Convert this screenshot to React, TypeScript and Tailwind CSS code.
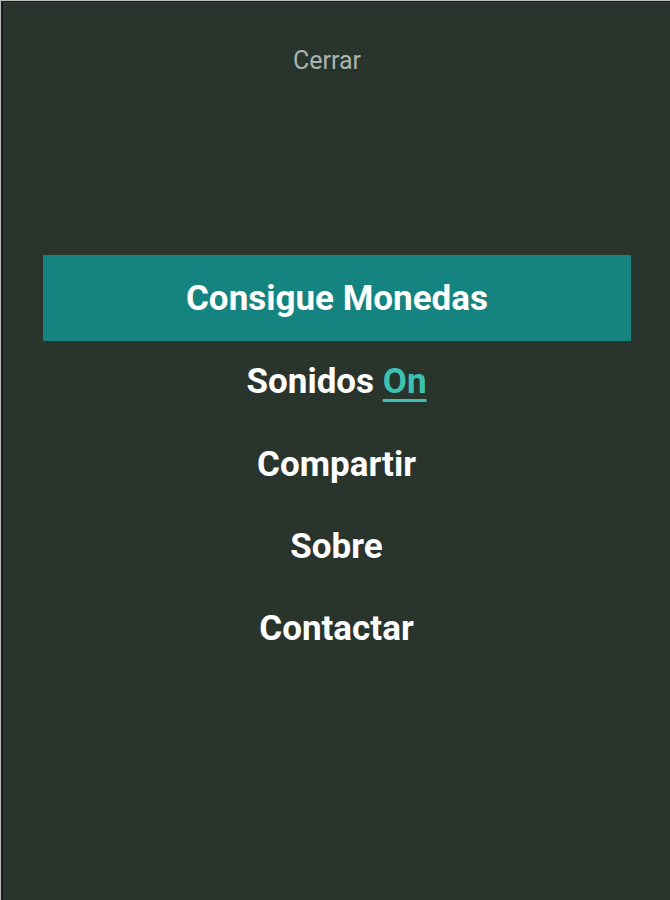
import React, { useState } from 'react'

const items = ['Compartir', 'Sobre', 'Contactar']

export default function App() {
  const [soundOn, setSoundOn] = useState(true)

  return (
    <div className="h-[900px] w-full border-l border-t border-[#b9bcba] bg-[#29342d]">
      <div className="flex h-full flex-col border-l-2 border-t border-[#1b201d] font-['Roboto',sans-serif]">
        <div className="flex h-[117px] items-center justify-center pr-[19px]">
          <button className="text-[25px] text-[#aab3ad]">Cerrar</button>
        </div>

        <nav className="mt-[136px] flex flex-col items-center">
          <button className="ml-[1px] flex h-[86px] w-[588px] items-center justify-center bg-[#15837f] pt-[3px] text-[35px] font-bold text-white">
            Consigue Monedas
          </button>
          <button
            onClick={() => setSoundOn(!soundOn)}
            className="flex h-[82px] items-center justify-center text-[35px] font-bold text-white"
          >
            Sonidos&nbsp;
            <span className="text-[#3cc2b1] underline decoration-[3px] underline-offset-[6px]">
              {soundOn ? 'On' : 'Off'}
            </span>
          </button>
          {items.map((label) => (
            <button key={label} className="flex h-[82px] items-center justify-center pt-[2px] text-[35px] font-bold text-white">
              {label}
            </button>
          ))}
        </nav>
      </div>
    </div>
  )
}
